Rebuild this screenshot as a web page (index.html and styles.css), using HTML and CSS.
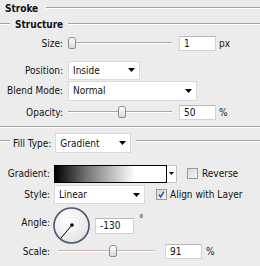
FILE: index.html
```html
<!DOCTYPE html>
<html lang="en">
<head>
  <meta charset="UTF-8" />
  <title>Stroke</title>
  <link rel="stylesheet" href="styles.css">
</head>
<body>
  <div class="panel">
    <div class="head head-main">
      <span class="title">Stroke</span>
      <span class="rule"></span>
    </div>
    <div class="head head-sub">
      <span class="rule lead"></span>
      <span class="title">Structure</span>
      <span class="rule"></span>
    </div>

    <div class="row row-size">
      <span class="label">Size:</span>
      <div class="slider">
        <span class="track"></span>
        <span class="thumb" style="left: 0px"></span>
      </div>
      <div class="field">1</div>
      <span class="unit">px</span>
    </div>

    <div class="row row-position">
      <span class="label">Position:</span>
      <div class="select select-position">
        <span class="value">Inside</span>
        <svg class="arrow" width="7" height="4" viewBox="0 0 7 4"><path d="M0 0H7L3.5 4Z" fill="#000"/></svg>
      </div>
    </div>

    <div class="row row-blend">
      <span class="label">Blend Mode:</span>
      <div class="select select-blend">
        <span class="value">Normal</span>
        <svg class="arrow" width="7" height="4" viewBox="0 0 7 4"><path d="M0 0H7L3.5 4Z" fill="#000"/></svg>
      </div>
    </div>

    <div class="row row-opacity">
      <span class="label">Opacity:</span>
      <div class="slider">
        <span class="track"></span>
        <span class="thumb" style="left: 50px"></span>
      </div>
      <div class="field">50</div>
      <span class="unit">%</span>
    </div>

    <div class="sep"></div>

    <div class="head head-fill">
      <span class="rule lead"></span>
      <span class="title">Fill Type:</span>
      <div class="select select-fill">
        <span class="value">Gradient</span>
        <svg class="arrow" width="7" height="4" viewBox="0 0 7 4"><path d="M0 0H7L3.5 4Z" fill="#000"/></svg>
      </div>
      <span class="rule"></span>
    </div>

    <div class="row row-gradient">
      <span class="label label-narrow">Gradient:</span>
      <div class="gradient-pick">
        <span class="swatch"></span>
        <span class="drop">
          <svg width="5" height="3" viewBox="0 0 5 3"><path d="M0 0H5L2.5 3Z" fill="#000"/></svg>
        </span>
      </div>
      <span class="check check-reverse"></span>
      <span class="check-label">Reverse</span>
    </div>

    <div class="row row-style">
      <span class="label label-narrow">Style:</span>
      <div class="select select-style">
        <span class="value">Linear</span>
        <svg class="arrow" width="7" height="4" viewBox="0 0 7 4"><path d="M0 0H7L3.5 4Z" fill="#000"/></svg>
      </div>
      <span class="check check-align">
        <svg width="11" height="11" viewBox="0 0 11 11"><path d="M2.5 5.5L4.5 8.5L8.5 2" fill="none" stroke="#2c4f9e" stroke-width="1.8"/></svg>
      </span>
      <span class="check-label">Align with Layer</span>
    </div>

    <div class="row row-angle">
      <span class="label label-narrow label-angle">Angle:</span>
      <svg class="dial" width="37" height="37" viewBox="0 0 37 37">
        <defs>
          <radialGradient id="dialfill" cx="0.4" cy="0.35" r="0.7">
            <stop offset="0" stop-color="#ffffff"/>
            <stop offset="1" stop-color="#e2e2e2"/>
          </radialGradient>
        </defs>
        <circle cx="18.5" cy="18.5" r="17.5" fill="url(#dialfill)" stroke="#4d566c" stroke-width="1.6"/>
        <line x1="19" y1="18" x2="8" y2="31" stroke="#000" stroke-width="1"/>
        <circle cx="19" cy="18" r="1.8" fill="#000"/>
      </svg>
      <div class="field field-angle">-130</div>
      <span class="unit unit-deg">°</span>
    </div>

    <div class="row row-scale">
      <span class="label label-narrow">Scale:</span>
      <div class="slider slider-scale">
        <span class="track"></span>
        <span class="thumb" style="left: 51px"></span>
      </div>
      <div class="field field-scale">91</div>
      <span class="unit unit-scale">%</span>
    </div>
  </div>
</body>
</html>
```

FILE: styles.css
```css
* {
  margin: 0;
  padding: 0;
  box-sizing: border-box;
}

body {
  font-family: "DejaVu Sans Condensed", "Liberation Sans", sans-serif;
  font-size: 10px;
  color: #111;
  background-color: #ececec;
}

.panel {
  width: 260px;
  height: 266px;
  overflow: hidden;
  background-color: #ececec;
}

/* group headings with etched rules */
.head {
  display: flex;
  align-items: center;
  height: 16px;
}

.head .title {
  font-weight: bold;
}

.rule {
  flex: 1;
  height: 2px;
  border-top: 1px solid #a3a3a3;
  border-bottom: 1px solid #ffffff;
}

.rule.lead {
  flex: none;
  width: 10px;
}

.head-main {
  padding-left: 5px;
}

.head-main .rule {
  margin-left: 8px;
}

.head-sub .title {
  margin: 0 5px;
}

.head-fill {
  height: 20px;
  margin-top: 5px;
}

.head-fill .rule {
  margin-bottom: 4px;
}

.head-fill .title {
  font-weight: normal;
  margin: 0 4px 0 3px;
}

.head-fill .rule:last-child {
  margin-left: 5px;
}

.sep {
  height: 2px;
  margin-top: 2px;
  border-top: 1px solid #a3a3a3;
  border-bottom: 1px solid #ffffff;
}

/* rows */
.row {
  display: flex;
  align-items: center;
}

.label {
  width: 63px;
  margin-right: 5px;
  text-align: right;
  white-space: nowrap;
}

.label-narrow {
  width: 50px;
  margin-right: 4px;
}

.row-size {
  height: 22px;
}

.row-position {
  height: 20px;
  margin-top: 6px;
}

.row-blend {
  height: 21px;
}

.row-opacity {
  height: 23px;
}

.row-gradient {
  height: 21px;
  margin-top: 10px;
}

.row-style {
  height: 21px;
}

.row-angle {
  height: 37px;
  margin-top: 2px;
}

.row-scale {
  height: 15px;
}

/* slider */
.slider {
  position: relative;
  width: 104px;
  height: 13px;
}

.track {
  position: absolute;
  left: 0;
  right: 0;
  top: 5px;
  height: 2px;
  border-top: 1px solid #a9a9a9;
  border-bottom: 1px solid #ffffff;
}

.thumb {
  position: absolute;
  top: 0;
  width: 8px;
  height: 12px;
  border: 1px solid #8d8d8d;
  border-radius: 3px 3px 2px 2px;
  background: linear-gradient(#ffffff, #d9d9d9);
}

.slider-scale {
  width: 97px;
  margin-left: 4px;
}

.slider-scale .track {
  border-top-color: #c9b7b0;
}

/* text fields */
.field {
  width: 37px;
  height: 15px;
  margin-left: 7px;
  padding-left: 4px;
  line-height: 13px;
  background-color: #ffffff;
  border: 1px solid #d2d2d2;
  border-top-color: #b9b9b9;
}

.unit {
  margin-left: 3px;
  color: #222;
}

.field-angle {
  width: 39px;
  height: 16px;
  margin-left: 5px;
  line-height: 14px;
}

.unit-deg {
  align-self: flex-start;
  margin-left: 5px;
  margin-top: 7px;
  line-height: 10px;
}

.field-scale {
  margin-left: 10px;
}

.unit-scale {
  margin-left: 4px;
}

/* dropdowns */
.select {
  display: flex;
  align-items: center;
  height: 19px;
  padding-left: 4px;
  background-color: #ffffff;
  border: 1px solid #dadada;
}

.select .value {
  flex: 1;
}

.select .arrow {
  margin-right: 4px;
}

.select-position {
  width: 72px;
}

.select-blend {
  width: 129px;
  height: 20px;
}

.select-fill {
  width: 76px;
  height: 20px;
}

.select-style {
  width: 91px;
}

/* gradient picker */
.gradient-pick {
  display: flex;
  height: 18px;
}

.swatch {
  width: 113px;
  border: 1px solid #000000;
  background: linear-gradient(to right, #000000 0%, #7a7a7a 30%, #ffffff 72%, #ffffff 100%);
}

.drop {
  width: 10px;
  display: flex;
  align-items: center;
  justify-content: center;
  background-color: #ffffff;
  border: 1px solid #c4c4c4;
  border-left: none;
}

/* checkboxes */
.check {
  display: flex;
  align-items: center;
  justify-content: center;
  width: 11px;
  height: 11px;
  border: 1px solid #9a9a9a;
  background: linear-gradient(135deg, #d8d8d8, #f6f6f6);
}

.check-reverse {
  margin-left: 10px;
}

.check-align {
  margin-left: 11px;
}

.check-label {
  margin-left: 4px;
  white-space: nowrap;
}

.row-style .check-label {
  margin-left: 3px;
}

/* angle dial */
.label-angle {
  align-self: flex-start;
  margin-top: 10px;
  margin-right: 3px;
}

.dial {
  display: block;
}
```
